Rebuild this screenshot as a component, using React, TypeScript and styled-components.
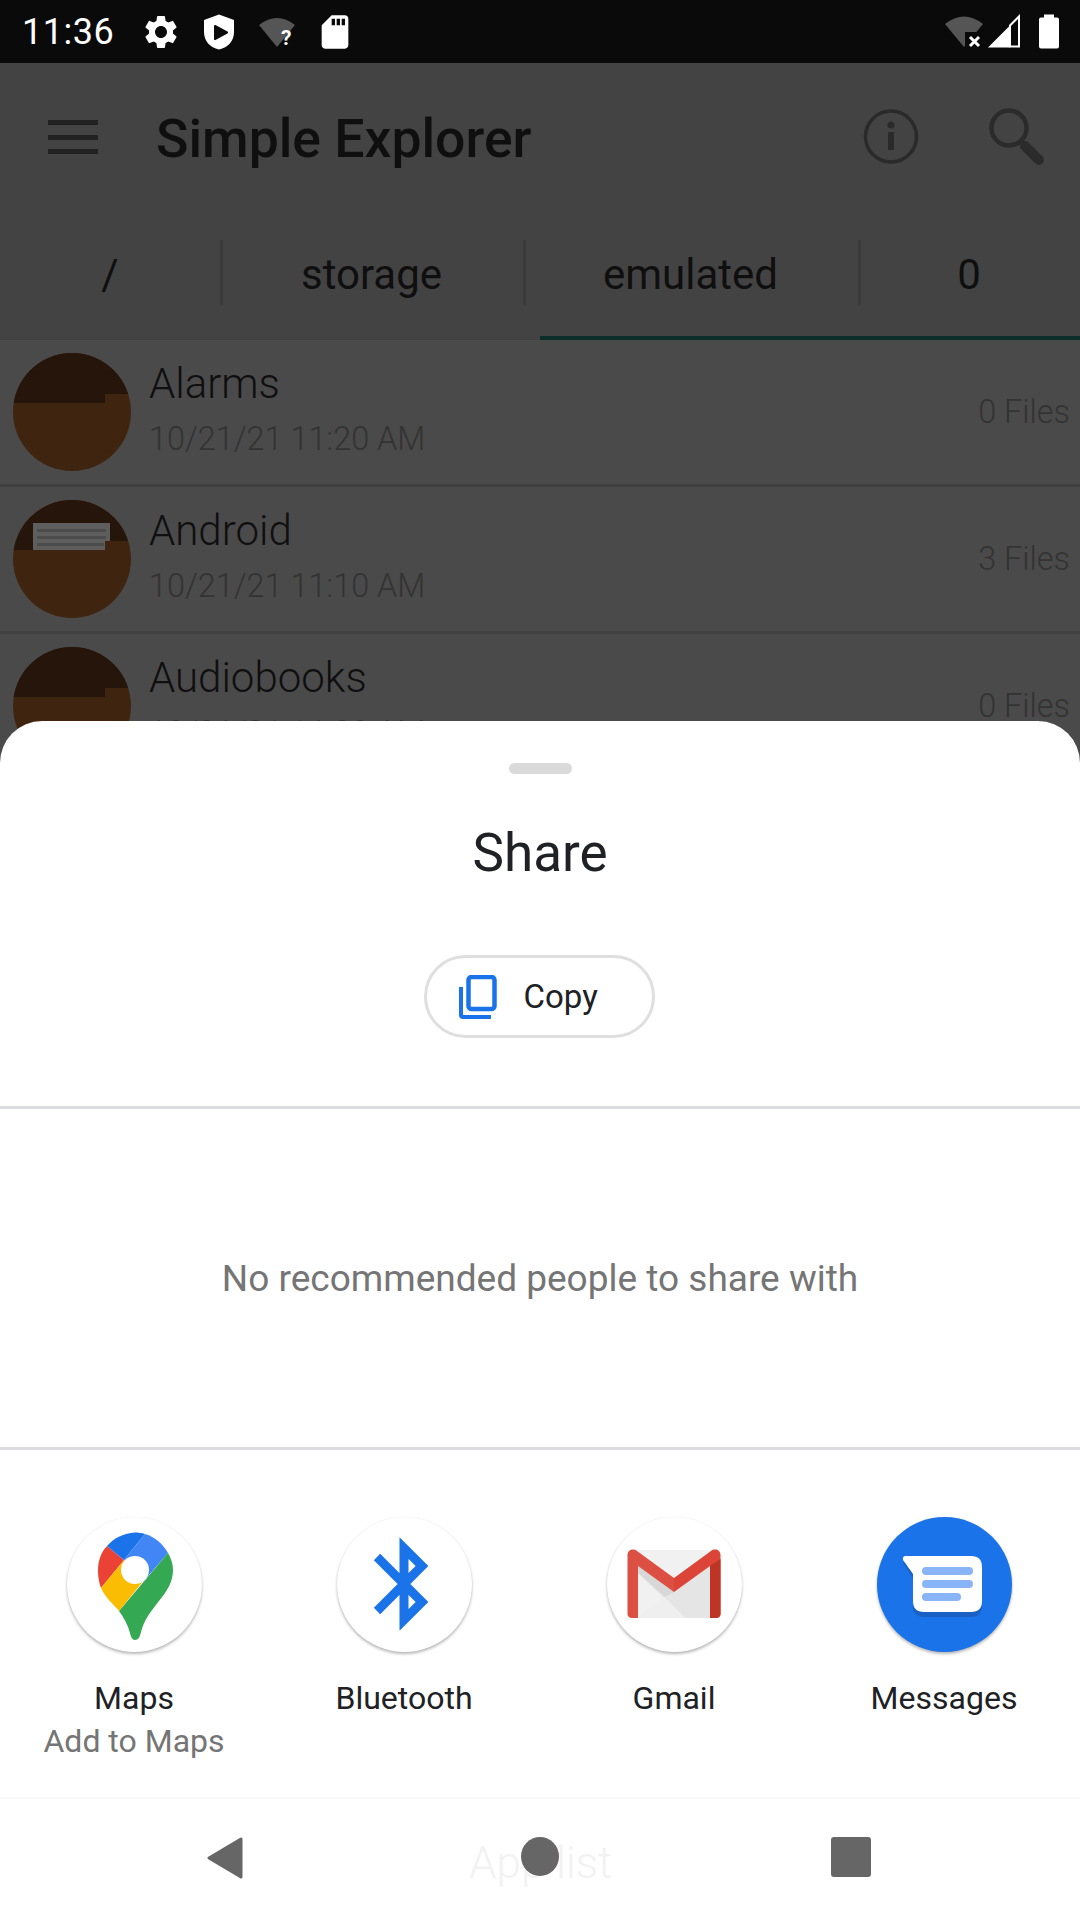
import React from "react";
import styled, { createGlobalStyle } from "styled-components";
import { MdSettings, MdSdCard } from "react-icons/md";

const GlobalStyle = createGlobalStyle`
  html, body {
    margin: 0;
    padding: 0;
    background: #494949;
  }
  * {
    box-sizing: border-box;
  }
`;

const folders = [
  { name: "Alarms", date: "10/21/21 11:20 AM", files: "0 Files", paper: false },
  { name: "Android", date: "10/21/21 11:10 AM", files: "3 Files", paper: true },
  { name: "Audiobooks", date: "10/21/21 11:20 AM", files: "0 Files", paper: false },
];

const FolderIcon: React.FC<{ paper: boolean }> = ({ paper }) => (
  <FolderSvg viewBox="0 0 118 118">
    <rect width="118" height="118" fill="#3f250f" />
    <path d="M0 0H118V41H92V50H0Z" fill="#25150a" />
    {paper && (
      <>
        <path d="M20 23H97V41H92V50H20Z" fill="#5e5e5e" />
        <path d="M24 29H93V32H24ZM24 36H93V39H24ZM24 43H91V46H24Z" fill="#4c4c4c" />
      </>
    )}
  </FolderSvg>
);

const MapsIcon = () => (
  <AppSvg viewBox="0 0 135 135">
    <path d="M40 29C34 35 31 44 31 53C31 60 32 66 34 71L57 43Z" fill="#ea4335" />
    <path d="M40 29C47 21 57 16 68 15.5C71 15.5 75 16 78 17L57 43Z" fill="#1a73e8" />
    <path d="M78 17C88 20 96 27 101 36L76 65L57 43Z" fill="#4285f4" />
    <path
      d="M101 36C104 41 106 47 106 53C106 65 100 74 92 84C84 94 77 103 74 115C73 120 71 123 68 123C65 123 64 120 63 116C61 108 57 101 52 94Z"
      fill="#34a853"
    />
    <path d="M34 71L57 43L77 63L52 94C45 86 38 80 34 71Z" fill="#fbbc04" />
    <circle cx="68" cy="53" r="14" fill="#fff" />
  </AppSvg>
);

const BluetoothIcon = () => (
  <AppSvg viewBox="0 0 135 135">
    <path
      d="M40 40L85 85L67 103V31L85 49L40 94"
      fill="none"
      stroke="#1a73e8"
      strokeWidth="9"
      strokeMiterlimit="4"
    />
  </AppSvg>
);

const GmailIcon = () => (
  <AppSvg viewBox="0 0 135 135">
    <path d="M26 33H108V101H26Z" fill="#f1f1f1" />
    <path d="M31 101L67 73L103 101Z" fill="#eeeeee" />
    <path d="M31 49L67 75L103 49V101H78L31 56Z" fill="#e5e5e5" />
    <path d="M31 101L58 80L78 101Z" fill="#efefef" />
    <path d="M31 49L60 70L67 75L58 80L31 56Z" fill="#d8d8d8" />
    <path
      d="M20.5 38C20.5 33 26 31 30 34L67 61L67 75L31 49V101H25C22 101 20.5 99 20.5 97Z"
      fill="#dc5044"
    />
    <path d="M113.5 38C113.5 33 108 31 104 34L67 61V75L103 49V101H109C112 101 113.5 99 113.5 97Z" fill="#db4437" />
    <path d="M103 49L113.5 42V97C113.5 99 112 101 109 101H103Z" fill="#be3526" />
  </AppSvg>
);

const MessagesIcon = () => (
  <AppSvg viewBox="0 0 135 135">
    <path
      d="M30 43H94Q105 43 105 54V88Q105 100 94 100H47Q36 100 36 88V61L26 46Z"
      fill="#1a5bb5"
      opacity="0.75"
    />
    <path
      d="M29 39H94Q105 39 105 50V84Q105 95 94 95H47Q36 95 36 84V57L26 43Q25 39 29 39Z"
      fill="#fff"
    />
    <rect x="45" y="50" width="51" height="8" rx="4" fill="#8ab4f8" />
    <rect x="45" y="63" width="51" height="8" rx="4" fill="#8ab4f8" />
    <rect x="45" y="76" width="39" height="8" rx="4" fill="#8ab4f8" />
  </AppSvg>
);

const apps = [
  { name: "Maps", sub: "Add to Maps", icon: <MapsIcon />, filled: false },
  { name: "Bluetooth", sub: "", icon: <BluetoothIcon />, filled: false },
  { name: "Gmail", sub: "", icon: <GmailIcon />, filled: false },
  { name: "Messages", sub: "", icon: <MessagesIcon />, filled: true },
];

const App: React.FC = () => {
  return (
    <Screen>
      <GlobalStyle />
      <StatusBar>
        <Clock>11:36</Clock>
        <StatusLeft>
          <StatusCell>
            <MdSettings size={40} color="#fff" />
          </StatusCell>
          <StatusCell>
            <svg width="40" height="40" viewBox="0 0 40 40">
              <path d="M20 2.5L35 8V20C35 29 29 35.5 20 37.5C11 35.5 5 29 5 20V8Z" fill="#fff" />
              <path d="M16 14L28 20.5L16 27Z" fill="#0a0a0a" stroke="#0a0a0a" strokeWidth="2" strokeLinejoin="round" />
            </svg>
          </StatusCell>
          <StatusCell>
            <svg width="40" height="40" viewBox="0 0 40 40">
              <path d="M20 35L2 13Q20 -1 38 13Z" fill="#555" />
              <QuestionMark x="24" y="33">?</QuestionMark>
            </svg>
          </StatusCell>
          <StatusCell>
            <MdSdCard size={40} color="#fff" />
          </StatusCell>
        </StatusLeft>
        <StatusRight>
          <svg width="40" height="40" viewBox="0 0 40 40">
            <path d="M20 35L1 12Q20 -3 39 12Z" fill="#555" />
            <path d="M21 20H40V40H21Z" fill="#0a0a0a" />
            <path d="M26 25L35 34M35 25L26 34" stroke="#fff" strokeWidth="3" />
          </svg>
          <svg width="40" height="40" viewBox="0 0 40 40">
            <path d="M4 35.5L26 13.5V35.5Z" fill="#fff" />
            <path d="M26 13.5L35 4.5V34.5H26Z" fill="none" stroke="#fff" strokeWidth="2" />
          </svg>
          <svg width="40" height="40" viewBox="0 0 40 40">
            <path d="M15 2.5H25V5.5H28Q30 5.5 30 7.5V34.5Q30 36.5 28 36.5H12Q10 36.5 10 34.5V7.5Q10 5.5 12 5.5H15Z" fill="#fff" />
          </svg>
        </StatusRight>
      </StatusBar>

      <AppBar>
        <Hamburger>
          <span />
          <span />
          <span />
        </Hamburger>
        <Title>Simple Explorer</Title>
        <AppBarActions>
          <svg width="60" height="60" viewBox="0 0 60 60">
            <circle cx="30" cy="30.5" r="25.5" fill="none" stroke="#2a2a2a" strokeWidth="3.5" />
            <circle cx="30" cy="19" r="3.5" fill="#2a2a2a" />
            <rect x="27" y="26" width="6" height="18" fill="#2a2a2a" />
          </svg>
          <svg width="60" height="60" viewBox="0 0 60 60">
            <circle cx="22" cy="22" r="17.5" fill="none" stroke="#2b2b2b" strokeWidth="4.5" />
            <path d="M33 35L38 40" stroke="#2b2b2b" strokeWidth="4" />
            <path d="M38 40L52 54" stroke="#2b2b2b" strokeWidth="10" strokeLinecap="round" />
          </svg>
        </AppBarActions>
      </AppBar>

      <Tabs>
        <Tab $width={220}>/</Tab>
        <Tab $width={303}>storage</Tab>
        <Tab $width={335} $active>
          emulated
        </Tab>
        <Tab $width={222} $last>
          0
        </Tab>
      </Tabs>

      <List>
        {folders.map((folder) => (
          <Row key={folder.name}>
            <FolderIcon paper={folder.paper} />
            <RowText>
              <RowName>{folder.name}</RowName>
              <RowDate>{folder.date}</RowDate>
            </RowText>
            <RowFiles>{folder.files}</RowFiles>
          </Row>
        ))}
      </List>

      <Sheet>
        <Header>
          <Handle />
          <SheetTitle>Share</SheetTitle>
          <CopyChip>
            <svg width="38" height="44" viewBox="0 0 38 44" fill="none">
              <rect x="9.5" y="2" width="26" height="32" rx="3" stroke="#1a73e8" strokeWidth="4.5" />
              <path d="M2 12V40Q2 42 4 42H32" stroke="#1a73e8" strokeWidth="4" />
            </svg>
            <CopyLabel>Copy</CopyLabel>
          </CopyChip>
        </Header>
        <People>No recommended people to share with</People>
        <AppsGrid>
          {apps.map((app) => (
            <AppCell key={app.name}>
              <AppCircle $filled={app.filled}>{app.icon}</AppCircle>
              <AppName>{app.name}</AppName>
              {app.sub && <AppSub>{app.sub}</AppSub>}
            </AppCell>
          ))}
        </AppsGrid>
        <NavBar>
          <GhostLabel>App list</GhostLabel>
          <NavBack viewBox="0 0 36 42">
            <path d="M34 2V40L2 21Z" fill="#666" stroke="#666" strokeWidth="3" strokeLinejoin="round" />
          </NavBack>
          <NavHome />
          <NavRecents />
        </NavBar>
      </Sheet>
    </Screen>
  );
};

const Screen = styled.div`
  position: relative;
  width: 1080px;
  height: 1920px;
  overflow: hidden;
  display: flex;
  flex-direction: column;
  font-family: Roboto, "Liberation Sans", sans-serif;
`;

const StatusBar = styled.div`
  height: 63px;
  background: #0a0a0a;
  display: flex;
  align-items: center;
  padding: 0 11px 0 22px;
  color: #fff;
`;

const Clock = styled.div`
  width: 119px;
  font-size: 36px;
  letter-spacing: 0.5px;
`;

const StatusLeft = styled.div`
  display: flex;
  gap: 18px;
`;

const StatusCell = styled.div`
  width: 40px;
  height: 40px;
  display: flex;
`;

const StatusRight = styled.div`
  margin-left: auto;
  display: flex;

  svg:last-child {
    margin-left: 5px;
  }
`;

const QuestionMark = styled.text`
  font-family: Roboto, sans-serif;
  font-size: 21px;
  font-weight: 700;
  fill: #fff;
`;

const AppBar = styled.div`
  height: 163px;
  background: #434343;
  display: flex;
  align-items: center;
  padding: 0 33px 0 48px;
`;

const Hamburger = styled.div`
  width: 50px;
  height: 34px;
  margin-top: -15px;
  display: flex;
  flex-direction: column;
  justify-content: space-between;

  span {
    height: 5px;
    background: #222;
  }
`;

const Title = styled.div`
  margin-left: 58px;
  margin-top: -12px;
  font-size: 53.5px;
  font-weight: 500;
  color: #0f0f0f;
`;

const AppBarActions = styled.div`
  margin-left: auto;
  margin-top: -18px;
  display: flex;
  gap: 66px;
`;

const Tabs = styled.div`
  height: 114px;
  background: #434343;
  display: flex;
  align-items: flex-start;
`;

const Tab = styled.div<{ $width: number; $active?: boolean; $last?: boolean }>`
  position: relative;
  width: ${({ $width }) => $width}px;
  height: 114px;
  padding-bottom: 18px;
  display: flex;
  align-items: center;
  justify-content: center;
  font-size: 42px;
  color: #0f0f0f;

  &::before {
    content: ${({ $last }) => ($last ? "none" : '""')};
    position: absolute;
    right: -3px;
    top: 14px;
    width: 3px;
    height: 65px;
    background: #3a3a3a;
  }

  &::after {
    content: ${({ $active }) => ($active ? '""' : "none")};
    position: absolute;
    left: 17px;
    bottom: 0;
    width: 540px;
    height: 4px;
    background: #0c2e2a;
  }
`;

const List = styled.div`
  flex: 1;
  background: #4a4a4a;
  overflow: hidden;
`;

const Row = styled.div`
  height: 147px;
  padding: 13px 10px 0 13px;
  display: flex;
  align-items: flex-start;
  border-bottom: 3px solid #404040;
`;

const FolderSvg = styled.svg`
  width: 118px;
  height: 118px;
  border-radius: 50%;
  flex-shrink: 0;
`;

const RowText = styled.div`
  margin-left: 18px;
  padding-top: 6px;
  display: flex;
  flex-direction: column;
`;

const RowName = styled.div`
  font-size: 42px;
  font-weight: 300;
  line-height: 50px;
  color: #0f0f0f;
`;

const RowDate = styled.div`
  margin-top: 11px;
  font-size: 32.4px;
  font-weight: 300;
  line-height: 38px;
  color: #333;
`;

const RowFiles = styled.div`
  margin-left: auto;
  margin-top: 40px;
  font-size: 32.4px;
  font-weight: 300;
  line-height: 38px;
  color: #333;
`;

const Sheet = styled.div`
  position: absolute;
  left: 0;
  right: 0;
  bottom: 0;
  height: 1199px;
  background: #fff;
  border-radius: 42px 42px 0 0;
  display: flex;
  flex-direction: column;
`;

const Header = styled.div`
  height: 388px;
  padding-top: 42px;
  border-bottom: 3px solid #dadce0;
  display: flex;
  flex-direction: column;
  align-items: center;
`;

const Handle = styled.div`
  width: 63px;
  height: 11px;
  border-radius: 6px;
  background: #dadada;
`;

const SheetTitle = styled.div`
  margin-top: 49px;
  font-size: 53px;
  line-height: 60px;
  color: #202124;
`;

const CopyChip = styled.div`
  margin-top: 72px;
  margin-left: -2px;
  width: 231px;
  height: 83px;
  border: 3px solid #dfdfdf;
  border-radius: 42px;
  display: flex;
  align-items: center;
  padding-left: 32px;
`;

const CopyLabel = styled.span`
  margin-left: 27px;
  font-size: 33px;
  color: #202124;
`;

const People = styled.div`
  height: 341px;
  padding-top: 1px;
  border-bottom: 3px solid #dadce0;
  display: flex;
  align-items: center;
  justify-content: center;
  font-size: 37px;
  color: #757575;
`;

const AppsGrid = styled.div`
  height: 347px;
  margin-left: -1px;
  display: grid;
  grid-template-columns: repeat(4, 270px);
`;

const AppCell = styled.div`
  padding-top: 67px;
  display: flex;
  flex-direction: column;
  align-items: center;
`;

const AppCircle = styled.div<{ $filled: boolean }>`
  width: 135px;
  height: 135px;
  border-radius: 50%;
  background: ${({ $filled }) => ($filled ? "#1a73e8" : "#fff")};
  box-shadow: 0 2px 3px rgba(0, 0, 0, 0.28), 0 0 1px rgba(0, 0, 0, 0.08);
`;

const AppSvg = styled.svg`
  display: block;
  width: 135px;
  height: 135px;
`;

const AppName = styled.div`
  margin-top: 24px;
  font-size: 32px;
  line-height: 44px;
  color: #202124;
`;

const AppSub = styled.div`
  font-size: 32px;
  line-height: 43px;
  color: #757575;
`;

const NavBar = styled.div`
  position: relative;
  flex: 1;
  border-top: 2px solid #fafafa;
  padding-top: 38px;
  display: flex;
  align-items: flex-start;
`;

const GhostLabel = styled.span`
  position: absolute;
  left: 469px;
  top: 38px;
  font-size: 44px;
  font-weight: 300;
  white-space: nowrap;
  color: #f2f2f2;
`;

const NavBack = styled.svg`
  position: relative;
  margin-left: 207px;
  width: 36px;
  height: 42px;
`;

const NavHome = styled.div`
  position: relative;
  margin-left: 278px;
  width: 38px;
  height: 39px;
  border-radius: 50%;
  background: #666;
`;

const NavRecents = styled.div`
  position: relative;
  margin-left: 272px;
  width: 40px;
  height: 40px;
  border-radius: 3px;
  background: #666;
`;

export default App;
